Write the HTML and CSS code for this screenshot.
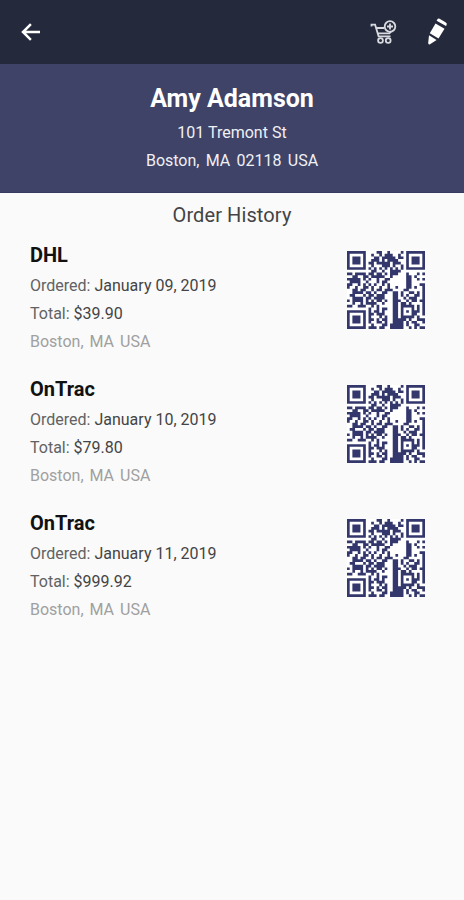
FILE: index.html
```html
<!DOCTYPE html>
<html lang="en">
<head>
    <meta charset="UTF-8">
    <meta name="viewport" content="width=device-width, initial-scale=1.0">
    <title>Order History</title>
    <link rel="stylesheet" href="styles.css">
</head>
<body>
<header class="toolbar">
    <svg class="back" viewBox="0 0 20 18">
        <path d="M19 9H2.500M9.900 1.200L2 9l7.900 7.800"/>
    </svg>
    <svg class="cart" viewBox="0 0 28 26">
        <path d="M1.500 7.500V5.700h3.600L8.600 17.300H20.500M6.300 9H14M7.800 14.300H19.500L21.500 12"/>
        <circle cx="20" cy="7.500" r="5.300"/>
        <path d="M20 4.500v6M17 7.500h6"/>
        <circle cx="10.500" cy="21.500" r="2.400"/>
        <circle cx="18.200" cy="21.500" r="2.400"/>
    </svg>
    <svg class="pencil" viewBox="0 0 20 28">
        <path d="M9.300 1.600Q10 0 11.600 .8L17.500 4.200Q19.500 5.400 18.600 7L18 8 8.600 2.700z"/>
        <path d="M7.500 5.500L16.500 10.700 10.500 20.400 1.800 15.200z"/>
        <path d="M1 17.300L8.600 22 2 26.300Q.2 27 .2 25z"/>
    </svg>
</header>

<section class="customer">
    <h1>Amy Adamson</h1>
    <p class="street">101 Tremont St</p>
    <p class="city">Boston, MA 02118 USA</p>
</section>

<h2>Order History</h2>

<main class="orders">
    <div class="order">
        <div class="info">
            <h3>DHL</h3>
            <p>Ordered: <span>January 09, 2019</span></p>
            <p>Total: <span>$39.90</span></p>
            <p class="place">Boston, MA USA</p>
        </div>
        <svg class="qr" viewBox="0 0 29 29"><path/></svg>
    </div>
    <div class="order">
        <div class="info">
            <h3>OnTrac</h3>
            <p>Ordered: <span>January 10, 2019</span></p>
            <p>Total: <span>$79.80</span></p>
            <p class="place">Boston, MA USA</p>
        </div>
        <svg class="qr" viewBox="0 0 29 29"><path/></svg>
    </div>
    <div class="order">
        <div class="info">
            <h3>OnTrac</h3>
            <p>Ordered: <span>January 11, 2019</span></p>
            <p>Total: <span>$999.92</span></p>
            <p class="place">Boston, MA USA</p>
        </div>
        <svg class="qr" viewBox="0 0 29 29"><path/></svg>
    </div>
</main>

<script src="script.js"></script>
</body>
</html>
```
FILE: styles.css
```css
* {
    box-sizing: border-box;
}
body {
    margin: 0;
    min-height: 900px;
    background: #fafafa;
    color: #444;
    font-family: Roboto, Arial, sans-serif;
}
h1, h2, h3, p {
    margin: 0;
}
.toolbar {
    display: flex;
    align-items: center;
    height: 64px;
    padding: 0 16px 0 21px;
    background: #242a3b;
}
.toolbar svg {
    fill: none;
    stroke: #fff;
}
.toolbar .back {
    width: 20px;
    height: 18px;
    margin-right: auto;
    stroke-width: 2.5;
}
.toolbar .cart {
    width: 28px;
    height: 26px;
    margin-right: 30px;
    stroke: #d8dadf;
    stroke-width: 1.8;
}
.toolbar .pencil {
    width: 20px;
    height: 28px;
    fill: #fff;
    stroke: none;
}
.customer {
    height: 129px;
    padding-top: 19px;
    background: #3f4367;
    border-bottom: 1px solid #373b60;
    color: #fff;
    text-align: center;
}
.customer h1 {
    font-size: 25px;
    line-height: 32px;
    font-weight: 700;
}
.customer p {
    font-size: 16px;
    line-height: 28px;
    color: #f0f0f5;
}
.customer .street {
    margin-top: 4px;
}
.customer .city {
    word-spacing: 2.3px;
}
h2 {
    margin-top: 10px;
    font-size: 20px;
    line-height: 24px;
    font-weight: 400;
    letter-spacing: 0.1px;
    text-align: center;
    color: #444;
}
.orders {
    padding: 14px 39px 0 30px;
}
.order {
    display: flex;
    justify-content: space-between;
    height: 134px;
}
.order h3 {
    font-size: 20px;
    line-height: 28px;
    font-weight: 700;
    color: #111;
}
.order p {
    font-size: 16px;
    line-height: 28px;
    color: #626262;
}
.order h3 + p {
    margin-top: 3px;
}
.order span {
    color: #444;
}
.order .place {
    color: #a0a0a0;
    word-spacing: 2px;
}
.qr {
    width: 78px;
    height: 78px;
    margin-top: 10px;
    background: #fff;
    fill: #33376b;
}
```
FILE: script.js
```js
const modules = [
    "#######....##..#....#.#######",
    "#.....#..#..#.###..#..#.....#",
    "#.###.#...##.#####.##.#.###.#",
    "#.###.#..###.#.####...#.###.#",
    "#.###.#.##.#####.###..#.###.#",
    "#.....#..#...###.#..#.#.....#",
    "#######.#.#.#.#.#.#.#.#######",
    ".........##..#..####.........",
    "##.####.##.##.#.###...#...#.#",
    "..##..##.#####..#.....##.#...",
    "#####.#.#..#..##......##..#.#",
    ".####..#...#.##.......##.....",
    "##..#.#.#.#..#.#......##...##",
    "#..#..##.#..#..#..#...##.#..#",
    "..##.##..#.##.###....##.....#",
    "..####.##.#..##..##.#..##.#.#",
    ".##...#.##.###...##.#.#..##.#",
    "..####.##.####...##..#.###..#",
    "#.####.#.#.##.#..###..#.##.##",
    "..#..#.####..#...##.##.#....#",
    "##..###..#.#.....##.#####.#.#",
    "........#..#.##..##.#...#.#.#",
    "#######.#.##.#...##.#.#.###.#",
    "#.....#.##.###...##.#...##..#",
    "#.###.#.#...#.#..##.#####.#..",
    "#.###.#.##.#.##..#####.#..###",
    "#.###.#.#..##.#..####.#.##..#",
    "#.....#..#...##.#####.#..##..",
    "#######.###.##..#####..#.#.##"
];

// join the dark modules into one path
let d = "";
modules.forEach((row, y) => {
    for (const run of row.matchAll(/#+/g)) {
        d += `M${run.index} ${y}h${run[0].length}v1h-${run[0].length}z`;
    }
});

document.querySelectorAll(".qr path").forEach(path => path.setAttribute("d", d));
```
